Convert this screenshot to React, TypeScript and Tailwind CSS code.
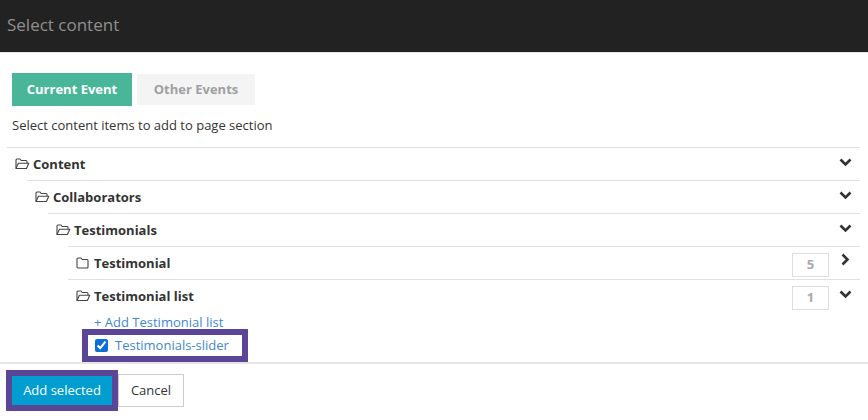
import React from "react";

const FolderOpen = () => (
  <svg width="15" height="12" viewBox="0 0 15 12" fill="none" stroke="#444" strokeWidth="1.1" strokeLinejoin="round" className="shrink-0">
    <path d="M1 10.5V2a1 1 0 0 1 1-1h3l1.2 1.5H11a1 1 0 0 1 1 1V5" />
    <path d="M1 10.5 3.4 5.2h10.4L11.4 10.5z" />
  </svg>
);
const FolderClosed = () => (
  <svg width="13" height="12" viewBox="0 0 13 12" fill="none" stroke="#444" strokeWidth="1.1" strokeLinejoin="round" className="shrink-0">
    <path d="M1 2a1 1 0 0 1 1-1h3l1.2 1.5H11a1 1 0 0 1 1 1V10a1 1 0 0 1-1 1H2a1 1 0 0 1-1-1z" />
  </svg>
);
const Down = () => (
  <svg width="13" height="9" viewBox="0 0 13 9" fill="none" stroke="#333" strokeWidth="2.6">
    <path d="M1.5 1.5 6.5 6.5 11.5 1.5" />
  </svg>
);
const Right = () => (
  <svg width="9" height="13" viewBox="0 0 9 13" fill="none" stroke="#333" strokeWidth="2.6">
    <path d="M1.5 1.5 6.5 6.5 1.5 11.5" />
  </svg>
);

function Row({ ml, label, open = true, count }: { ml: string; label: string; open?: boolean; count?: string }) {
  return (
    <div className={`${ml} h-[33px] border-t border-[#e0e0e0] flex items-start`}>
      <div className="flex items-center gap-[3px] pt-[7px] pl-[8px] flex-1 text-[13px] font-bold text-[#333] leading-[18px]">
        {open ? <FolderOpen /> : <div className="flex pr-[2px]"><FolderClosed /></div>}
        <span>{label}</span>
      </div>
      {count && (
        <div className="mt-[6px] w-[37px] h-[24px] border border-[#ddd] text-[13px] font-bold text-[#aaa] flex items-center justify-center">
          {count}
        </div>
      )}
      <div className={`w-[31px] pl-[1px] flex justify-center ${open ? "pt-[10px]" : "pt-[6px]"}`}>
        {open ? <Down /> : <Right />}
      </div>
    </div>
  );
}

export default function App() {
  return (
    <div className="w-[868px] h-[420px] bg-white overflow-hidden flex flex-col font-['Open_Sans',sans-serif]">
      <div className="h-[53px] shrink-0 bg-[#222222] border-b border-[#e5e5e5] pl-[7px] pb-[2px] flex items-center text-[17px] text-[#8f8f8f]">
        Select content
      </div>
      <div className="flex items-center gap-[5px] pl-[12px] pt-[20px]">
        <div className="w-[120px] h-[33px] bg-[#4ab699] text-white text-[13px] font-bold flex items-center justify-center">Current Event</div>
        <div className="w-[118px] h-[31px] bg-[#f4f4f4] text-[#a0a0a0] text-[13px] font-bold flex items-center justify-center">Other Events</div>
      </div>
      <div className="pl-[12px] pt-[10px] text-[13px] leading-[18px] text-[#333]">Select content items to add to page section</div>
      <div className="mt-[13px] ml-[7px] w-[853px] flex flex-col">
        <Row ml="ml-0" label="Content" />
        <Row ml="ml-[20px]" label="Collaborators" />
        <Row ml="ml-[41px]" label="Testimonials" />
        <Row ml="ml-[61px]" label="Testimonial" open={false} count="5" />
        <Row ml="ml-[61px]" label="Testimonial list" count="1" />
      </div>
      <div className="mt-[1px] ml-[94px] text-[13px] leading-[18px] text-[#3f88d0]">+ Add Testimonial list</div>
      <div className="ml-[82px] w-[166px] h-[33px] -mt-[2px] border-[6px] border-[#5b4597] flex items-center gap-[7px] pl-[7px] text-[13px] text-[#3f88d0]">
        <input type="checkbox" defaultChecked readOnly className="w-[13px] h-[13px] accent-[#0b6fd6]" />
        <span className="pt-[1px]">Testimonials-slider</span>
      </div>
      <div className="border-t-2 border-[#e5e5e5] flex items-start pl-[6px] pt-[6px]">
        <div className="w-[112px] h-[41px] border-[6px] border-[#5b4597] bg-[#009dce] text-white text-[13px] flex items-center justify-center">Add selected</div>
        <div className="mt-[4px] w-[66px] h-[33px] border border-[#ccc] text-[13px] text-[#333] flex items-center justify-center">Cancel</div>
      </div>
    </div>
  );
}
